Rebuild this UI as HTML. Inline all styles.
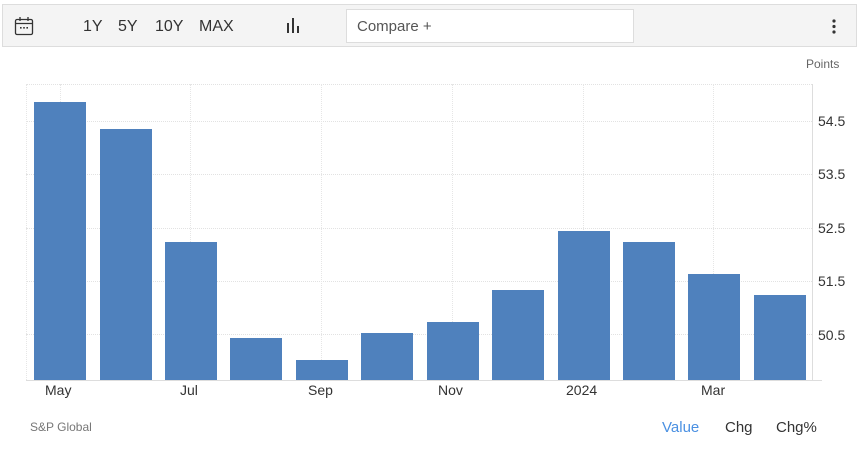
<!DOCTYPE html>
<html><head><style>
*{margin:0;padding:0;box-sizing:border-box}
body{width:859px;height:450px;background:#fff;font-family:"Liberation Sans",sans-serif;position:relative;overflow:hidden}
.tb{position:absolute;left:2px;top:4px;width:855px;height:43px;background:#f4f4f4;border:1px solid #ddd}
.t{position:absolute;font-size:16px;color:#333}
.cmp{position:absolute;left:346px;top:9px;width:288px;height:34px;background:#fff;border:1px solid #ddd;font-size:15px;color:#555;padding:8px 10px}
.bar{position:absolute;background:#4f81bd;bottom:70px;width:52px}
.ax{position:absolute;font-size:14px;color:#333}
.hg{position:absolute;left:26px;width:786px;border-top:1px dotted #e2e2e2;height:0}
.vg{position:absolute;top:84px;height:296px;border-left:1px dotted #e6e6e6;width:0}
</style></head><body>
<div class="tb"></div>
<svg style="position:absolute;left:14px;top:16px" width="20" height="20" viewBox="0 0 20 20"><rect x="1.5" y="3.5" width="17" height="15" rx="1.5" fill="none" stroke="#333" stroke-width="1.3"/><line x1="1.5" y1="7.5" x2="18.5" y2="7.5" stroke="#333" stroke-width="1.3"/><line x1="6" y1="1" x2="6" y2="5" stroke="#333" stroke-width="1.3"/><line x1="14" y1="1" x2="14" y2="5" stroke="#333" stroke-width="1.3"/><rect x="6" y="11" width="1.6" height="1.6" fill="#333"/><rect x="9.2" y="11" width="1.6" height="1.6" fill="#333"/><rect x="12.4" y="11" width="1.6" height="1.6" fill="#333"/></svg>
<div class="t" style="left:83px;top:18px">1Y</div>
<div class="t" style="left:118px;top:18px">5Y</div>
<div class="t" style="left:155px;top:18px">10Y</div>
<div class="t" style="left:199px;top:18px">MAX</div>
<svg style="position:absolute;left:285px;top:17px" width="16" height="16"><rect x="2" y="6" width="2" height="10" fill="#333"/><rect x="7" y="1" width="2" height="15" fill="#333"/><rect x="12" y="9" width="2" height="7" fill="#333"/></svg>
<div class="cmp">Compare +</div>
<svg style="position:absolute;left:831px;top:18px" width="6" height="18"><circle cx="3" cy="3" r="1.6" fill="#333"/><circle cx="3" cy="8.5" r="1.6" fill="#333"/><circle cx="3" cy="14" r="1.6" fill="#333"/></svg>
<div style="position:absolute;left:806px;top:57px;font-size:12px;color:#666">Points</div>
<div class="hg" style="top:84px"></div>
<div class="hg" style="top:121px"></div><div class="hg" style="top:174px"></div><div class="hg" style="top:228px"></div><div class="hg" style="top:281px"></div><div class="hg" style="top:334px"></div>
<div class="vg" style="left:26px"></div>
<div class="vg" style="left:60px"></div><div class="vg" style="left:190px"></div><div class="vg" style="left:321px"></div><div class="vg" style="left:452px"></div><div class="vg" style="left:583px"></div><div class="vg" style="left:713px"></div>
<div style="position:absolute;left:812px;top:84px;height:297px;border-left:1px solid #ddd"></div>
<div style="position:absolute;left:26px;top:380px;width:796px;border-top:1px solid #ddd"></div>
<div class="bar" style="left:34px;top:102px"></div>
<div class="bar" style="left:100px;top:129px"></div>
<div class="bar" style="left:165px;top:242px"></div>
<div class="bar" style="left:230px;top:338px"></div>
<div class="bar" style="left:296px;top:360px"></div>
<div class="bar" style="left:361px;top:333px"></div>
<div class="bar" style="left:427px;top:322px"></div>
<div class="bar" style="left:492px;top:290px"></div>
<div class="bar" style="left:558px;top:231px"></div>
<div class="bar" style="left:623px;top:242px"></div>
<div class="bar" style="left:688px;top:274px"></div>
<div class="bar" style="left:754px;top:295px"></div>
<div class="ax" style="left:818px;top:113px">54.5</div>
<div class="ax" style="left:818px;top:166px">53.5</div>
<div class="ax" style="left:818px;top:220px">52.5</div>
<div class="ax" style="left:818px;top:273px">51.5</div>
<div class="ax" style="left:818px;top:327px">50.5</div>
<div class="ax" style="left:45px;top:382px">May</div>
<div class="ax" style="left:180px;top:382px">Jul</div>
<div class="ax" style="left:308px;top:382px">Sep</div>
<div class="ax" style="left:438px;top:382px">Nov</div>
<div class="ax" style="left:566px;top:382px">2024</div>
<div class="ax" style="left:701px;top:382px">Mar</div>
<div style="position:absolute;left:30px;top:420px;font-size:12px;color:#777">S&amp;P Global</div>
<div class="ax" style="left:662px;top:419px;color:#4a90e2;font-size:15px">Value</div>
<div class="ax" style="left:725px;top:419px;font-size:15px">Chg</div>
<div class="ax" style="left:776px;top:419px;font-size:15px">Chg%</div>
</body></html>
